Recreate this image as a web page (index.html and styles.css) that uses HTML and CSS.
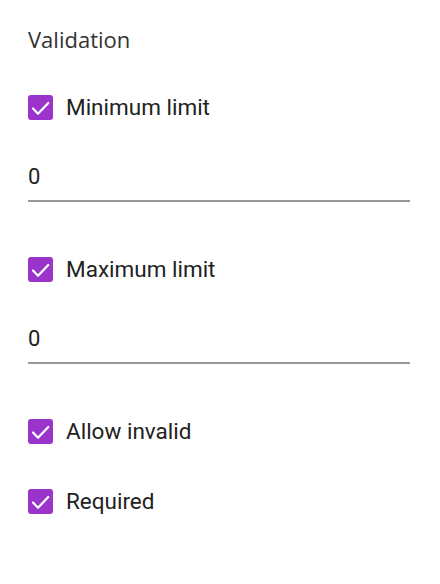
FILE: index.html
```html
<!DOCTYPE html>
<html>
<head>
<meta charset="utf-8">
<link rel="stylesheet" href="styles.css">
</head>
<body>
<div class="panel">
  <div class="title">Validation</div>
  <label class="check check-first">
    <span class="box"><svg viewBox="0 0 25 25" width="25" height="25"><polyline points="5,13.5 10,18.8 20.3,8" fill="none" stroke="#fff" stroke-width="2.2" stroke-linecap="round" stroke-linejoin="round"/></svg></span>
    <span class="label">Minimum limit</span>
  </label>
  <div class="field"><span class="value">0</span></div>
  <label class="check">
    <span class="box"><svg viewBox="0 0 25 25" width="25" height="25"><polyline points="5,13.5 10,18.8 20.3,8" fill="none" stroke="#fff" stroke-width="2.2" stroke-linecap="round" stroke-linejoin="round"/></svg></span>
    <span class="label">Maximum limit</span>
  </label>
  <div class="field"><span class="value">0</span></div>
  <label class="check">
    <span class="box"><svg viewBox="0 0 25 25" width="25" height="25"><polyline points="5,13.5 10,18.8 20.3,8" fill="none" stroke="#fff" stroke-width="2.2" stroke-linecap="round" stroke-linejoin="round"/></svg></span>
    <span class="label">Allow invalid</span>
  </label>
  <label class="check check-tight">
    <span class="box"><svg viewBox="0 0 25 25" width="25" height="25"><polyline points="5,13.5 10,18.8 20.3,8" fill="none" stroke="#fff" stroke-width="2.2" stroke-linecap="round" stroke-linejoin="round"/></svg></span>
    <span class="label">Required</span>
  </label>
</div>
</body>
</html>
```
FILE: styles.css
```css
html, body {
  margin: 0;
  padding: 0;
  background: #fff;
}
.panel {
  width: 382px;
  padding: 25px 30px 0 28px;
  display: flex;
  flex-direction: column;
}
.title {
  font-family: "Open Sans", sans-serif;
  font-size: 22px;
  line-height: 28px;
  color: #333;
}
.check {
  display: flex;
  align-items: center;
  gap: 13px;
  height: 25px;
  margin-top: 55px;
}
.check-first {
  margin-top: 42px;
}
.check-tight {
  margin-top: 45px;
}
.box {
  width: 25px;
  height: 25px;
  border-radius: 3px;
  background: #9a34cb;
  display: block;
  flex: none;
}
.box svg {
  display: block;
}
.label {
  font-family: Roboto, sans-serif;
  font-size: 22.5px;
  line-height: 25px;
  color: #222;
}
.field {
  margin-top: 39px;
  padding: 6px 0 11px;
  border-bottom: 2px solid #999;
}
.value {
  display: block;
  font-family: Roboto, sans-serif;
  font-size: 22px;
  line-height: 24px;
  color: #222;
}
```
